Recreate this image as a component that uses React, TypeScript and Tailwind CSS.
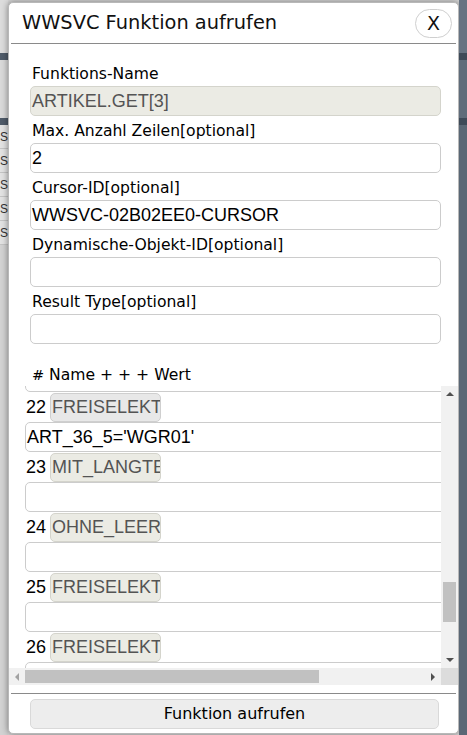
import React, { useLayoutEffect, useRef } from 'react';

const ui = { fontFamily: '"DejaVu Sans", Verdana, sans-serif' };
const arial = { fontFamily: '"Liberation Sans", Arial, sans-serif' };

const fields = [
  { label: 'Funktions-Name', value: 'ARTIKEL.GET[3]', disabled: true },
  { label: 'Max. Anzahl Zeilen[optional]', value: '2' },
  { label: 'Cursor-ID[optional]', value: 'WWSVC-02B02EE0-CURSOR' },
  { label: 'Dynamische-Objekt-ID[optional]', value: '' },
  { label: 'Result Type[optional]', value: '' },
];

const params = [
  'ARTNR', 'BEZEICHNUNG', 'MATCHCODE', 'EAN', 'LIEFERANT', 'WGR', 'ARTGR', 'LAGER', 'MIT_PREIS', 'MIT_BESTAND',
  'MIT_BILD', 'MIT_TEXT', 'SPRACHE', 'WAEHRUNG', 'DATUM', 'AB_DATUM', 'BIS_DATUM', 'SORTIERUNG', 'FELDER', 'FILTER',
  'FREISELEKTION', 'FREISELEKTION', 'MIT_LANGTEXT', 'OHNE_LEERFELDER', 'FREISELEKTION', 'FREISELEKTION', 'FREISELEKTION',
  'FREISELEKTION', 'FREISELEKTION',
];

function Strip({ side }: { side: 'left' | 'right' }) {
  const light = side === 'left';
  return (
    <div className={`flex w-[8px] flex-col overflow-hidden ${light ? 'bg-[#d2d2d2]' : 'bg-[#5a6775]'}`}>
      <div className={`h-[53px] ${light ? 'bg-[#dcdcdc]' : 'bg-[#667382]'}`} />
      <div className={`h-[7px] ${light ? 'bg-[#4f5b69]' : 'bg-[#3e4a58]'}`} />
      <div className={`h-[58px] ${light ? 'bg-[#d9d9d9]' : 'bg-[#5f6c7a]'}`} />
      <div className={`h-[7px] ${light ? 'bg-[#4f5b69]' : 'bg-[#3e4a58]'}`} />
      {light &&
        [0, 1, 2, 3, 4].map((i) => (
          <div key={i} className="flex h-[24px] items-center justify-end border-b border-[#c4c4c4] bg-[#e2e2e2] text-[12px] whitespace-nowrap text-[#333]" style={arial}>
            US
          </div>
        ))}
    </div>
  );
}

// kleine Pfeile der Scrollleisten
function Arrow({ dir }: { dir: 'up' | 'down' | 'left' | 'right' }) {
  const cls = {
    up: 'border-x-[4px] border-b-[4px] border-x-transparent border-b-[#505050]',
    down: 'border-x-[4px] border-t-[4px] border-x-transparent border-t-[#505050]',
    left: 'border-y-[4px] border-r-[4px] border-y-transparent border-r-[#a3a3a3]',
    right: 'border-y-[4px] border-l-[4px] border-y-transparent border-l-[#505050]',
  }[dir];
  return (
    <div className="flex h-[16px] w-[16px] shrink-0 items-center justify-center">
      <div className={`h-0 w-0 ${cls}`} />
    </div>
  );
}

export default function App() {
  const viewRef = useRef<HTMLDivElement>(null);

  useLayoutEffect(() => {
    if (viewRef.current) viewRef.current.scrollTop = 1254;
  }, []);

  return (
    <div className="flex h-[735px] w-[467px] bg-[#d6d6d6]" style={ui}>
      <Strip side="left" />

      <div className="mt-[2px] flex h-[732px] w-[451px] flex-col overflow-hidden rounded-[5px] border border-[#b8b8b8] bg-white shadow-[0_0_6px_rgba(0,0,0,0.45)]">
        {/* Kopf */}
        <div className="flex h-[40px] items-center justify-between pr-[6px] pl-[13px]">
          <span className="text-[19.4px] text-[#111]">WWSVC Funktion aufrufen</span>
          <button type="button" className="flex h-[29px] w-[37px] items-center justify-center rounded-[15px] border border-[#cfcfcf] bg-white text-[19px] text-[#111]">
            X
          </button>
        </div>
        <div className="mx-[2px] h-px bg-[#8a8a8a]" />

        {/* Felder */}
        <div className="flex flex-col gap-[5px] pt-[20px] pr-[17px] pl-[21px]">
          {fields.map((f) => (
            <div key={f.label} className="flex flex-col gap-[2px]">
              <label className="h-[20px] pl-[2px] text-[15.6px] leading-[20px] text-black">{f.label}</label>
              <div
                className={`flex h-[30px] items-center rounded-[5px] border pl-[1px] text-[18px] ${
                  f.disabled ? 'border-[#d4d4cc] bg-[#ebebe4] text-[#545454]' : 'border-[#cccccc] bg-white text-black'
                }`}
                style={arial}
              >
                {f.value}
              </div>
            </div>
          ))}
        </div>

        {/* Parameter */}
        <div className="mt-[21px] h-[20px] pl-[23px] text-[15.6px] leading-[20px] text-black">
          <span className="text-[14.5px]">#</span> Name + + + Wert
        </div>
        <div className="mt-px flex h-[299px] flex-col">
          <div className="flex h-[282px]">
            <div ref={viewRef} className="flex-1 overflow-hidden">
              <div className="w-[590px] pl-[16px]">
                {params.map((name, i) => (
                  <div key={i} className="flex flex-col">
                    <div className="flex h-[30px] items-center" style={arial}>
                      <span className="w-[25px] pl-px text-[18px] text-black">{i + 1}</span>
                      <div
                        className={`flex h-[29px] w-[111px] items-center overflow-hidden rounded-[5px] border pl-px text-[18px] whitespace-nowrap text-[#545454] ${
                          i === 21 ? 'border-[#cfcfcf] bg-[#e8e8e8]' : 'border-[#d4d4cc] bg-[#ebebe4]'
                        }`}
                      >
                        {name}
                      </div>
                    </div>
                    <div className="flex h-[30px] w-[570px] items-center rounded-[5px] border border-[#cccccc] pl-px text-[18px] text-black" style={arial}>
                      {i === 21 ? "ART_36_5='WGR01'" : ''}
                    </div>
                  </div>
                ))}
              </div>
            </div>
            {/* vertikale Scrollleiste */}
            <div className="flex w-[17px] flex-col items-center bg-[#f1f1f1]">
              <Arrow dir="up" />
              <div className="h-[180px]" />
              <div className="h-[40px] w-[13px] bg-[#c1c1c1]" />
              <div className="flex-1" />
              <Arrow dir="down" />
            </div>
          </div>
          {/* horizontale Scrollleiste */}
          <div className="flex h-[17px]">
            <div className="flex flex-1 items-center bg-[#f1f1f1]">
              <Arrow dir="left" />
              <div className="h-[13px] w-[294px] bg-[#c1c1c1]" />
              <div className="flex-1" />
              <Arrow dir="right" />
            </div>
            <div className="w-[17px] bg-[#dcdcdc]" />
          </div>
        </div>

        <div className="mx-[2px] mt-[8px] h-px bg-[#8a8a8a]" />
        <div className="pt-[5px] pr-[19px] pl-[21px]">
          <button type="button" className="flex h-[30px] w-full items-center justify-center rounded-[5px] border border-[#d9d9d9] bg-[#ededed] text-[16px] text-black">
            Funktion aufrufen
          </button>
        </div>
      </div>

      <Strip side="right" />
    </div>
  );
}
